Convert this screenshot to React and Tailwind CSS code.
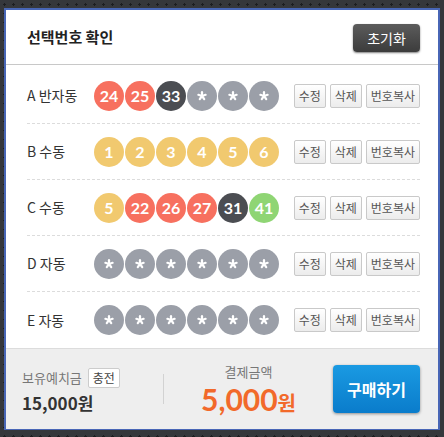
const ROWS = [
  { label: 'A 반자동', balls: [24, 25, 33, null, null, null] },
  { label: 'B 수동', balls: [1, 2, 3, 4, 5, 6] },
  { label: 'C 수동', balls: [5, 22, 26, 27, 31, 41] },
  { label: 'D 자동', balls: [null, null, null, null, null, null] },
  { label: 'E 자동', balls: [null, null, null, null, null, null] },
]

function ballColor(n) {
  if (n === null) return 'bg-[#9b9fa8]'
  if (n <= 10) return 'bg-[#f1c96f]'
  if (n <= 30) return 'bg-[#f7705f]'
  if (n <= 40) return 'bg-[#4b4d52]'
  return 'bg-[#8fd574]'
}

// five-spoke asterisk used for unpicked numbers
function Star() {
  const spokes = [-90, -18, 54, 126, 198]
  return (
    <svg width="10" height="10" viewBox="-5 -5 10 10">
      {spokes.map((a) => {
        const r = (a * Math.PI) / 180
        return (
          <line
            key={a}
            x1="0"
            y1="0"
            x2={Math.cos(r) * 3.8}
            y2={Math.sin(r) * 3.8}
            stroke="white"
            strokeWidth="2.2"
            strokeLinecap="round"
          />
        )
      })}
    </svg>
  )
}

function Ball({ n }) {
  return (
    <span
      className={`w-[30px] h-[30px] rounded-full flex items-center justify-center text-white font-bold text-[16px] font-['Lato',sans-serif] ${ballColor(n)}`}
    >
      {n === null ? <Star /> : n}
    </span>
  )
}

function SmallBtn({ children }) {
  return (
    <button className="h-[24px] px-[4px] border border-[#c9c9c9] rounded-[2px] bg-gradient-to-b from-white to-[#ececec] text-[12px] text-[#555] leading-none">
      {children}
    </button>
  )
}

export default function App() {
  return (
    <div className="w-[444px] h-[437px] bg-[#35373b] bg-[radial-gradient(#1c1d20_1px,transparent_1.2px)] bg-[length:9px_9px] pt-[8px] pl-[4px] font-['Noto_Sans_CJK_KR',sans-serif]">
      <div className="w-[436px] h-[422px] border-2 border-[#4866b6] bg-white flex flex-col">
        {/* header */}
        <div className="h-[55px] shrink-0 border-b border-[#c8c8c8] flex items-center pl-[21px] pr-[18px]">
          <h2 className="font-bold text-[15px] text-[#222]">선택번호 확인</h2>
          <button className="ml-auto w-[67px] h-[28px] mt-[2px] rounded-[4px] bg-gradient-to-b from-[#5c5c5c] to-[#3c3c3c] text-white text-[14px] shadow-[0_1px_2px_rgba(0,0,0,0.5)]">
            초기화
          </button>
        </div>

        {/* rows */}
        <div className="flex-1 pt-[3px] pl-[21px] pr-[18px]">
          {ROWS.map((row, i) => (
            <div
              key={row.label}
              className={`h-[56px] flex items-center ${i < ROWS.length - 1 ? 'border-b border-dashed border-[#dcdcdc]' : ''}`}
            >
              <span className="w-[67px] text-[14px] text-[#333]">{row.label}</span>
              <div className="flex gap-[1px]">
                {row.balls.map((n, j) => (
                  <Ball key={j} n={n} />
                ))}
              </div>
              <div className="ml-auto flex gap-[4px]">
                <SmallBtn>수정</SmallBtn>
                <SmallBtn>삭제</SmallBtn>
                <SmallBtn>번호복사</SmallBtn>
              </div>
            </div>
          ))}
        </div>

        {/* footer */}
        <div className="h-[81px] shrink-0 border-t border-[#dcdcdc] bg-[#eeeeee] flex items-center pl-[16px] pr-[18px]">
          <div className="w-[141px] flex flex-col gap-[6px]">
            <div className="flex items-center gap-[6px]">
              <span className="text-[13px] text-[#777]">보유예치금</span>
              <span className="h-[20px] px-[4px] border border-[#ccc] rounded-[2px] bg-white text-[12px] text-[#444] flex items-center">충전</span>
            </div>
            <span className="text-[17px] font-bold text-[#333] leading-none">15,000원</span>
          </div>
          <div className="w-px h-[30px] bg-[#d2d2d2]" />
          <div className="w-[169px] flex flex-col items-center">
            <span className="text-[13px] text-[#777] leading-none">결제금액</span>
            <span className="text-[#f2692a] font-bold leading-none mt-[6px]">
              <span className="text-[30px] font-['Lato',sans-serif]">5,000</span>
              <span className="text-[20px]">원</span>
            </span>
          </div>
          <button className="w-[87px] h-[48px] rounded-[4px] bg-gradient-to-b from-[#1a9ae2] to-[#0a7ccb] text-white font-bold text-[16px] shadow-[0_1px_3px_rgba(0,0,0,0.4)]">
            구매하기
          </button>
        </div>
      </div>
    </div>
  )
}
